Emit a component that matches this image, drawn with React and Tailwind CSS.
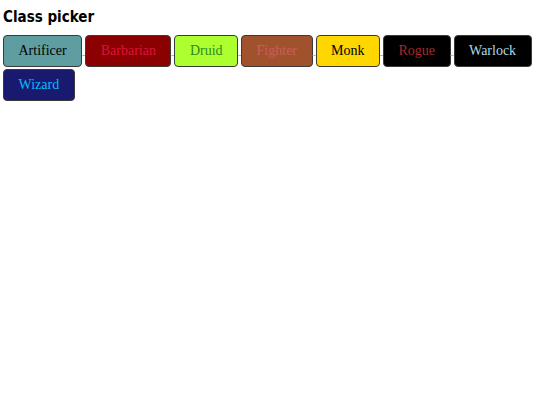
import React from "react";

const classes = [
  { name: "Artificer", cls: "bg-[#5F9EA0] text-black" },
  { name: "Barbarian", cls: "bg-[#8B0000] text-[#DC143C]" },
  { name: "Druid", cls: "bg-[#ADFF2F] text-[#2E8B1E]" },
  { name: "Fighter", cls: "bg-[#A0522D] text-[#CD5C5C]" },
  { name: "Monk", cls: "bg-[#FFD700] text-black" },
  { name: "Rogue", cls: "bg-black text-[#A52A2A]" },
  { name: "Warlock", cls: "bg-black text-[#ADD8E6]" },
  { name: "Wizard", cls: "bg-[#191970] text-[#00BFFF]" },
];

export default function App() {
  return (
    <div className="min-h-[405px] bg-white px-[3px] pt-[8px]">
      <h1 className="font-['DejaVu_Sans_Condensed','DejaVu_Sans',sans-serif] text-[15px] leading-[18px] font-bold text-black">
        Class picker
      </h1>
      <div className="mt-[7px] font-['Liberation_Serif',serif] text-[14px] leading-[34px] tracking-normal [word-spacing:-0.5px] underline decoration-[#b0b0d8]">
        {classes.map((c, i) => (
          <React.Fragment key={c.name}>
            <button
              className={`inline-block rounded-[4px] border border-[#3a3a3a] px-[14.5px] py-[7px] align-middle leading-[16px] [word-spacing:0] ${c.cls}`}
            >
              {c.name}
            </button>
            {i < classes.length - 1 ? " " : null}
          </React.Fragment>
        ))}
      </div>
    </div>
  );
}
